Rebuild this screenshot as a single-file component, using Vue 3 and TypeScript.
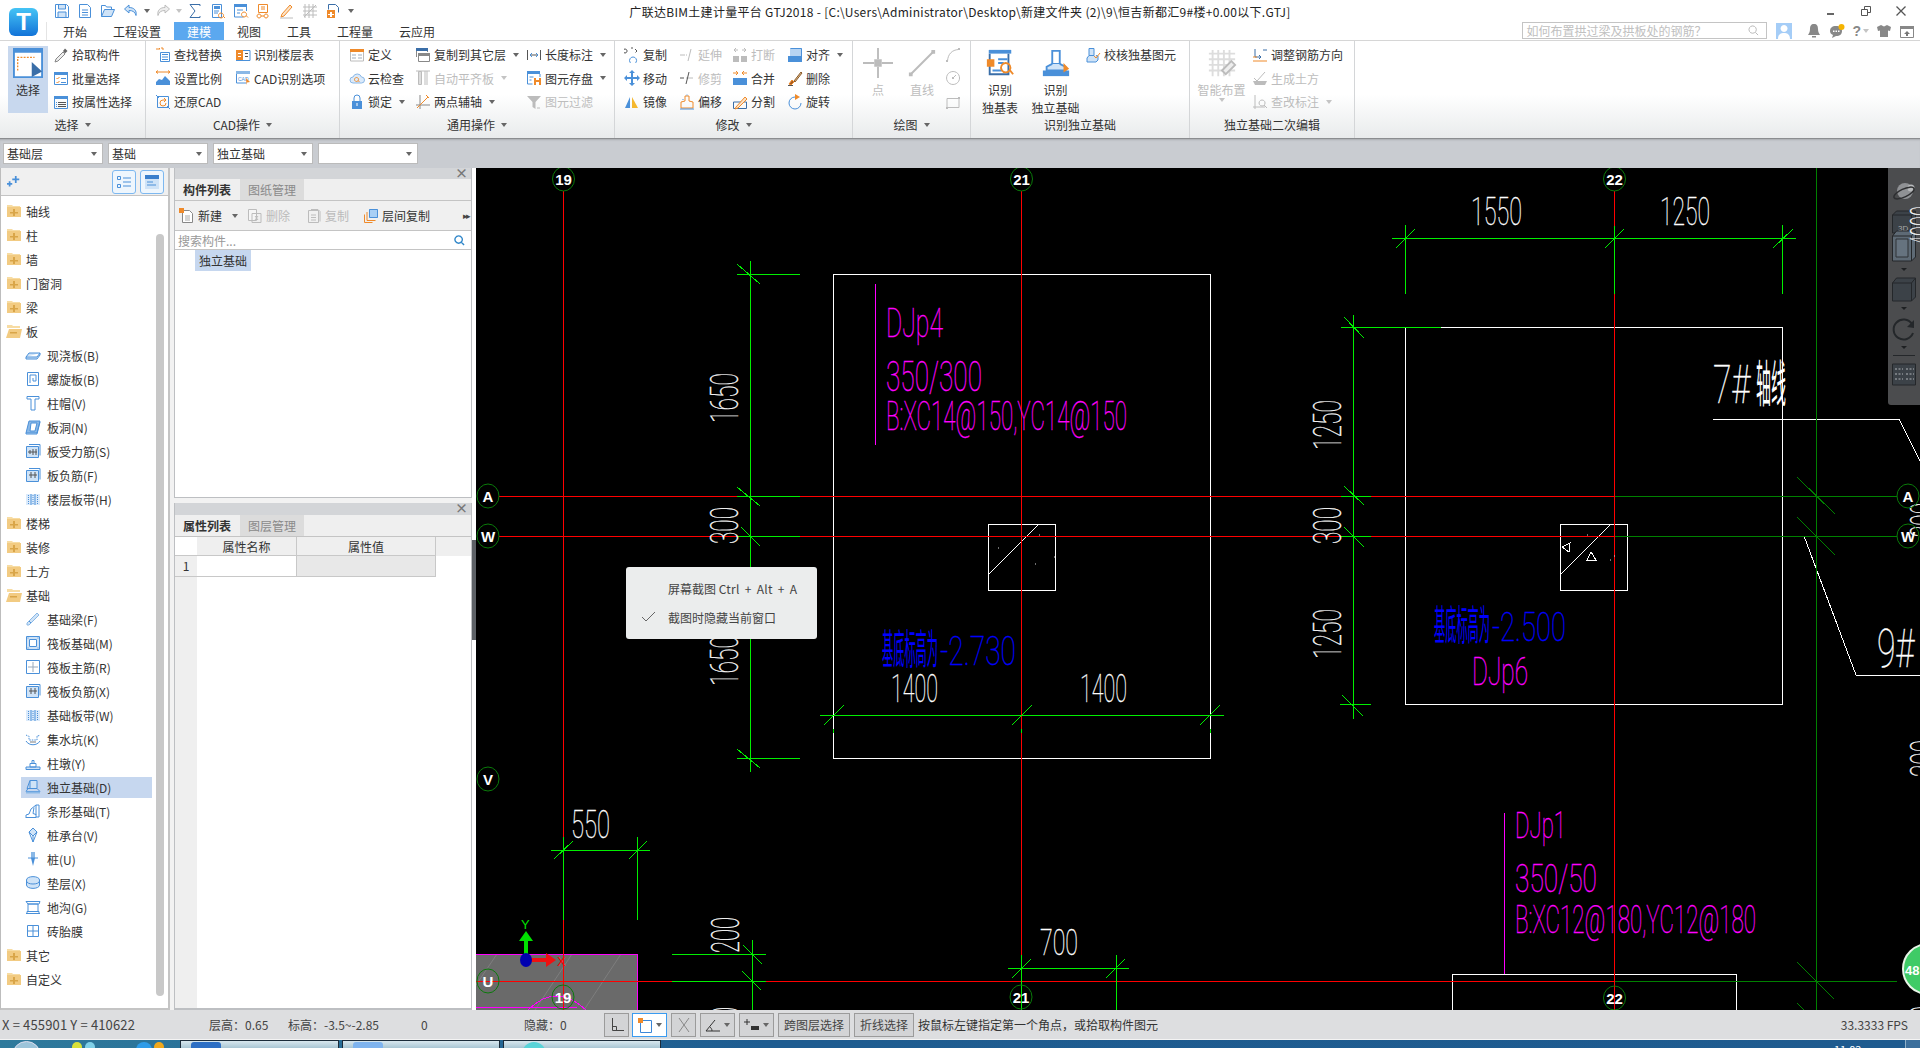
<script setup lang="ts">
const B = "#4a90d9";
const O = "#ef8a2a";
const G = "#bcbcbc";
const L = "#cfe3f7";
const K = "#555";

const p = (d: string, c = B, fill = "none") => `<path d="${d}" fill="${fill}" stroke="${c}"/>`;
const f = (d: string, c = B) => `<path d="${d}" fill="${c}"/>`;
const folder = (mark: string) =>
  f("M1 3V2h5l1 1h7v1H1z", "#f7dca3") + f("M1 4h14v10H1z", "#f2cb82") + f(mark, "#d9a548");

const icons: Record<string, string> = {
  save: p("M1.5 1.5h11l2 2v11h-13z") + p("M4.5 2v4h7V2M4 14V9h8v5", B, L),
  doc: p("M2.5 1.5h8l3 3v10h-11z") + p("M5 7h6M5 9.5h6M5 12h6"),
  open: p("M1.5 13.5v-11h4l1 1.5h5v2") + p("M1.5 13.5l3-7h10l-3 7z", B, L),
  undo: p("M6 2L1.5 6 6 10V7.5c4 0 6 1.5 7 5 1-5-2-8-7-8z", B, L),
  redo: p("M10 2l4.5 4L10 10V7.5c-4 0-6 1.5-7 5-1-5 2-8 7-8z", G, "#eee"),
  sum: p("M13 3V1.5H3L8 8l-5 6.5h10V13", "#3a6ea8"),
  report: p("M2.5 1.5h9v13h-9z") + f("M4 3h6v3H4z") + p("M4 8h5M4 10h4") + p("M11 10a2.5 2.5 0 1 0 .1 0zM13 13l2 2", O),
  find: f("M1 1h13v3H1z") + p("M1.5 4v10h9M13.5 4v4") + p("M4 7h6M4 10h3") + p("M11 9a2.5 2.5 0 1 0 .1 0zM13 12.5l2 2", O),
  glass: p("M2.5 1.5h9v8h-9z", O) + p("M5 4h4M5 6h4", O) + p("M3 11a2 2 0 1 0 .1 0zM10 11a2 2 0 1 0 .1 0zM5 13h3", O),
  pen: p("M3 11l8-9 2 2-8 9-3 1z", O, "#fbe3c8") + p("M1 15h13", G),
  grid: p("M3 1v14M7 1v14M11 1v14M1 4h14M1 8h14M1 12h14M2 14L14 2", G),
  addfile: p("M3.5 1.5h7l3 3v5M3.5 1.5v5", "#3a6ea8") + f("M2 7h8v8H2z", O) + f("M5 9h2v2h2v1H7v2H5v-2H3v-1h2z", "#fff"),
  select: f("M0 0h16v2H0z") + p("M.5 2h15v13.5H.5z", B, "#fff") + `<path d="M2.5 12V5h9" fill="none" stroke="${O}" stroke-width=".7" stroke-dasharray="1 .7"/>` + f("M10 7.5l5.5 5-5.5 3z", "#3a6ea8"),
  pick: p("M3 12l7-7 2 2-7 7-3 1z", "#888", "#eee") + f("M10 4l2-2.5 2.5 2.5L12 6.5z", "#666"),
  batch: f("M1 2h14v3H1z") + p("M1.5 5v9.5h13V5") + p("M3.5 8l1 1 2-2M3.5 12l1 1 2-2", O) + p("M8 8.5h5M8 12.5h5"),
  attr: f("M1 2h14v3H1z") + p("M1.5 5v9.5h13V5") + p("M5 8.5h8M5 10.5h8M5 12.5h8", K) + p("M3 8.5h1M3 10.5h1M3 12.5h1", B),
  replace: p("M1 2h4l-1-1M6 1h2v2", O) + p("M5.5 5.5h9v9h-9z") + f("M7 7h6v1H7zM7 9.5h6v1H7zM7 12h6v1H7z"),
  scale: p("M1 2h14M1 2l2-1.5M1 2l2 1.5M15 2l-2-1.5M15 2l-2 1.5", O) + f("M1 15V12l3-3 3 1 3-4 5 5v4z"),
  restore: p("M2.5 2.5h11v11h-11z") + p("M1 1l3 3M15 15l-3-3") + p("M11 9a3 3 0 1 1-3-3h2M9 4l2 2-2 2", O),
  floor: f("M1 3h7v10H1z", O) + p("M8 3.5h7v10H1") + f("M3 6h3v1H3zM3 9h3v1H3z", "#fff") + p("M10 6.5h3M10 9.5h3", K),
  cad: f("M1 1h14v3H1z", "#8ab8e6") + p("M1.5 4v9h10") + `<text x="3" y="10.5" font-size="5" font-family="Liberation Sans" fill="${B}">CAD</text>` + f("M11 8l4 4-3 .5-.5 2.5z", O),
  define: f("M1 2h14v3H1z", O) + p("M1.5 5v9h13V5", G) + f("M3 7h4v2H3zM3 10h4v2H3z", "#cfd6de") + f("M9 7h4v2H9zM9 10h4v2H9z", "#cfd6de"),
  cloud: p("M4 13a3 3 0 0 1 0-6 4.5 4.5 0 0 1 8.5 0 3 3 0 0 1 0 6z", "#8ab8e6", "#dbeafa") + p("M7.5 7.5a2 2 0 1 0 .1 0zM9 10.5l1.5 1.5", O),
  lock: p("M5 7V4a3 3 0 0 1 6 0v3", B) + f("M3 7h10v8H3z") + f("M7.5 9h1v3h-1z", "#fff"),
  copyfloor: f("M1 1h12v3H1z", "#3a6ea8") + p("M1.5 4v6M12.5 4v1", "#888") + f("M3 6h12v3H3z", "#888") + p("M3.5 9v5.5h11V9", "#888"),
  alignslab: p("M3.5 1.5h3v13h-3z", G, "#ddd") + f("M9 1h4v14H9z", "#ddd") + p("M1 1h14", G),
  twopoint: p("M1 11h14M5 1v14", "#888") + p("M2 14L13 3", O) + p("M11 1l3 3", O),
  dim: p("M1.5 3v10M14.5 3v10M4 8h8", K) + p("M6 6L4 8l2 2M10 6l2 2-2 2"),
  saveel: f("M1 1h13v3H1z") + p("M1.5 4v10h5M14 4v3") + p("M3.5 7h4M3.5 10h2") + f("M8 8h7v7H8z", O) + f("M10 8h3v2h-3zM10 12h3v3h-3z", "#fff"),
  filter: f("M1 2h14L9.5 8v7l-3-2V8z", G) + p("M11 14h3", G),
  copy: p("M1 2a2 2 0 1 0 .1 0", K) + p("M7 1h2", K) + p("M9 10a3.5 3.5 0 1 0 .1 0z") + p("M11 2l2 2-1.5 1.5", K),
  move: f("M8 0l3 3H5zM8 16l-3-3h6zM0 8l3-3v6zM16 8l-3 3V5z") + f("M3 7h10v2H3zM7 3h2v10H7z"),
  mirror: f("M1 14L6 3v11z") + f("M8 3l6 11H8z", "#f5b82e"),
  extend: p("M1 8h5", G) + `<path d="M7 8h2" stroke="${G}" stroke-dasharray="1 1"/>` + p("M12 2l-3 12", G),
  extendon: p("M1 8h4", K) + p("M7 8h7", G) + p("M10 2L7 14", K),
  offset: p("M6 2h4v5l4 1v6H2V8l4-1z", O) + p("M7.5 1h1M4 5v1", B) + p("M1 15h14"),
  breaks: f("M1 9h6v6H1zM9 9h6v6H9z", G) + p("M2 3h4M10 3h4M4 1l-2 2 2 2M12 1l2 2-2 2", G),
  merge: f("M1 8h14v7H1z") + p("M1 3h5M15 3h-5M4 1l2 2-2 2M12 1l-2 2 2 2", O),
  split: p("M1.5 8h13v6.5h-13z", "#3a6ea8") + p("M4 13L13 3l2 2-9 9-3 1z", O, "#fbe3c8"),
  alignto: f("M3 1h12v8H3z", "#b8d4f2") + p("M3.5 1.5h11v8", B) + f("M1 9h14v6H1z"),
  del: p("M2 14l3-4 2 2-3 3z", O, "#a85b1f") + p("M7 11L14 2l1 1-7 9z", "#8a5a2a", "#e4c28f") + p("M1 15.5h5", K),
  rotate: p("M8 3a6 6 0 1 0 6 6") + f("M8 0l5 3-5 3z", O),
  point: p("M8 0v6M8 10v6M0 8h6M10 8h6", G) + f("M6 6h4v4H6z", G),
  line: p("M2 14L14 2", G) + f("M1 13h2v2H1zM13 1h2v2h-2z", G),
  arc: p("M2.5 14C3 7 7 3 13.5 2.5", G) + f("M1 13h2v2H1zM13 1h2v2h-2z", G),
  circle: p("M8 1.5a6.5 6.5 0 1 0 .1 0zM8 8l3-3", G) + f("M7 7h2v2H7z", G),
  rect: p("M2 4.5h12v9H2z", G) + f("M13 3h2v2h-2zM1 13h2v2H1z", G),
  bigtable: f("M2 1h12v2H2z") + p("M2.5 3v11h10V3", "#3a6ea8") + f("M1 6h4v4H1z", O) + p("M7 6h5M7 8h3M4 12h5") + p("M11 8a2.5 2.5 0 1 0 .1 0zM13 11.5l2 2.5", O),
  bigfound: p("M6 1.5h4v7H6z") + p("M6 8.5L3 10v2h10v-2l-3-1.5", B, L) + f("M1 12h14v3H1z") + f("M12 8l3 3-3 2z", O),
  check: p("M4 1.5h5v7H4zM4 8.5L2 11v4h9l2-2V9l-2-.5", B, L) + p("M9 9l2 2 4-5", O),
  smart: p("M3 1v14M6 1v14M9 1v14M12 1v14M1 3h14M1 6h14M1 9h14M1 12h14", "#ddd") + p("M8 12l5-5 2 2-5 5z", G, "#eee"),
  rebar: p("M3 2v8h6M7 8l2 2-2 2", "#3a6ea8") + p("M1 14h14M1 10h4", O) + p("M11 3h4", "#3a6ea8"),
  earth: p("M2 8l3 3 8-9", G) + f("M1 11h14l-2 4H3z", G),
  mark: p("M3 1v14M1 13h12", G) + p("M10 6a3 3 0 1 0 .1 0zM12 11l3 3", G),
  plus2: f("M9 1h2v3h3v2h-3v3H9V6H6V4h3zM2 7h2v2h2v2H4v2H2v-2H0V9h2z"),
  fplus: folder("M7 6h2v3h3v1.5H9V13H7v-2.5H4V9h3z"),
  fminus: f("M1 3V2h5l1 1h7v2H1z", "#f7dca3") + f("M3 6h13l-2 9H0z", "#f2cb82") + f("M4 9h7v1.5H4z", "#d9a548"),
  list: p("M1.5 2.5h3v3h-3zM1.5 10.5h3v3h-3zM7 4h8M7 8h8M7 12h8"),
  panel: f("M1 1h14v14H1z", "#cfe3f7") + f("M1 1h14v4H1z", "#3a7fcc") + p("M3 8h6M3 11h9", B),
  pnew: p("M3.5 2.5h7l3 3v9h-10z", "#888", "#fff") + p("M6 8h5M6 10h5M6 12h5", "#aaa") + f("M0 0h5v5H0z", O),
  pdel: p("M1.5 1.5h8v11h-8z", G, "#f6f6f6") + p("M5 5.5h9v9H5z", G) + p("M8 8l3 4M11 8l-3 4", G),
  pcopy: p("M2.5 2.5h10v12h-10z", G) + p("M5 1.5h7l2 2v10", G) + p("M5 7h5M5 9.5h5M5 12h5", G),
  pfloor: f("M6 1h9v9H6z", "#a8cff5") + p("M6.5 1.5h8v8h-8z") + p("M4 4v8.5h8.5M1.5 6.5v8h8", O),
  slab: p("M4 6h11l-3 4H1zM1 10v2h11l3-4V6", B, L),
  spiral: p("M2.5 1.5h11v13h-11zM5 12V4h6v6H8V7"),
  cap: p("M2 1.5h12V4H10v11H6V4H2z"),
  hole: p("M4 2h11l-3 12H1z", B, "#8ab8e6") + p("M6 4h6l-2 8H5z", B, "#fff") + p("M1 14v1h11l3-12"),
  rebarS: p("M1.5 3.5h12v11h-12z", B, L) + p("M4 1.5h11v11") + p("M3 9h9M8 6v6M5 7v4M11 6v6", K),
  rebarN: p("M1.5 3.5h12v11h-12z", B, L) + p("M4 1.5h11v11") + p("M4 8h8M6 5v6M10 5v6", K),
  band: f("M1 3h14v11H1z", "#dbeafa") + p("M6 3v11M10 3v11", B) + `<path d="M3.5 4v10M8 4v10M12.5 4v10" stroke="${B}" stroke-dasharray="1 1"/>`,
  beam: p("M2 12L12 2l2 2L4 14H2z", "#8ab8e6", L) + p("M4 10l2 2"),
  raft: p("M1.5 1.5h13v13h-13zM4.5 4.5h7v7h-7z") + `<path d="M1.5 3h13M1.5 13h13M3 1.5v13M13 1.5v13" stroke="${B}" stroke-dasharray="1 1"/>`,
  raftR: p("M1.5 1.5h13v13h-13z") + p("M8 3v10M3 8h10", "#9ab"),
  pit: `<path d="M1 4c1 1 3 1 3 1v4h8V5s2 0 3-1" fill="none" stroke="${B}" stroke-dasharray="1.5 1"/>` + p("M1 10c3 5 11 5 14 0") + f("M5 10h6v2H5z", G),
  pier: p("M1 12h14v2.5H1z", B, L) + p("M5 8.5h6V12H5zM7 5.5h2v3H7z"),
  found: p("M5 1.5h7v8H5z", B, L) + p("M5 1.5L2 9.5h3M12 9.5l3 3H1l2-3") + f("M1 12.5h14v2H1z", "#8ab8e6"),
  strip: p("M1 15v-3l3-1 2-5 5-4h3v12h-3") + p("M1 14.5h10v-3l-3-1 1-6M11 2v10", B),
  cap2: p("M8 1l4 4-4 4-4-4zM4 5l4 10M12 5l-4 10M8 9v6", B, L),
  pile: f("M6 1h4v6H6z", "#8ab8e6") + p("M3 7h10") + f("M6 7h4l-2 8z"),
  pad: p("M1.5 5c0-4.5 13-4.5 13 0v5c0 4.5-13 4.5-13 0z", B, L) + p("M1.5 6c0 4 13 4 13 0"),
  ditch: p("M1 14.5h14M2 14.5v-2h12v2M3 12.5V5h10v7.5M1 2.5h14l-1 2.5H3z"),
  brick: p("M2.5 2.5h11v11h-11zM8 2.5v11M2.5 8h11"),
};

interface Item { t?: string; i: string; off?: boolean; caret?: boolean; big?: boolean; on?: boolean }
interface Col { w: number; items: Item[] }
interface Group { label: string; w: number; left: number; caret?: boolean; cols: Col[] }

const groups: Group[] = [
  { label: "选择", w: 146, left: 8, caret: true, cols: [
    { w: 45, items: [{ t: "选择", i: "select", big: true, on: true }] },
    { w: 90, items: [{ t: "拾取构件", i: "pick" }, { t: "批量选择", i: "batch" }, { t: "按属性选择", i: "attr" }] },
  ] },
  { label: "CAD操作", w: 194, left: 9, caret: true, cols: [
    { w: 80, items: [{ t: "查找替换", i: "replace" }, { t: "设置比例", i: "scale" }, { t: "还原CAD", i: "restore" }] },
    { w: 100, items: [{ t: "识别楼层表", i: "floor" }, { t: "CAD识别选项", i: "cad" }] },
  ] },
  { label: "通用操作", w: 275, left: 9, caret: true, cols: [
    { w: 66, items: [{ t: "定义", i: "define" }, { t: "云检查", i: "cloud" }, { t: "锁定", i: "lock", caret: true }] },
    { w: 111, items: [{ t: "复制到其它层", i: "copyfloor", caret: true }, { t: "自动平齐板", i: "alignslab", off: true, caret: true }, { t: "两点辅轴", i: "twopoint", caret: true }] },
    { w: 85, items: [{ t: "长度标注", i: "dim", caret: true }, { t: "图元存盘", i: "saveel", caret: true }, { t: "图元过滤", i: "filter", off: true }] },
  ] },
  { label: "修改", w: 238, left: 9, caret: true, cols: [
    { w: 55, items: [{ t: "复制", i: "copy" }, { t: "移动", i: "move" }, { t: "镜像", i: "mirror" }] },
    { w: 53, items: [{ t: "延伸", i: "extend", off: true }, { t: "修剪", i: "extendon", off: true }, { t: "偏移", i: "offset" }] },
    { w: 55, items: [{ t: "打断", i: "breaks", off: true }, { t: "合并", i: "merge" }, { t: "分割", i: "split" }] },
    { w: 60, items: [{ t: "对齐", i: "alignto", caret: true }, { t: "删除", i: "del" }, { t: "旋转", i: "rotate" }] },
  ] },
  { label: "绘图", w: 118, left: 4, caret: true, cols: [
    { w: 42, items: [{ t: "点", i: "point", big: true, off: true }] },
    { w: 46, items: [{ t: "直线", i: "line", big: true, off: true }] },
    { w: 20, items: [{ i: "arc", off: true }, { i: "circle", off: true }, { i: "rect", off: true }] },
  ] },
  { label: "识别独立基础", w: 219, left: 3, cols: [
    { w: 52, items: [{ t: "识别\n独基表", i: "bigtable", big: true }] },
    { w: 59, items: [{ t: "识别\n独立基础", i: "bigfound", big: true }] },
    { w: 100, items: [{ t: "校核独基图元", i: "check" }] },
  ] },
  { label: "独立基础二次编辑", w: 165, left: 1, cols: [
    { w: 61, items: [{ t: "智能布置", i: "smart", big: true, off: true, caret: true }] },
    { w: 100, items: [{ t: "调整钢筋方向", i: "rebar" }, { t: "生成土方", i: "earth", off: true }, { t: "查改标注", i: "mark", off: true, caret: true }] },
  ] },
];

const qat = ["save", "doc", "open", "undo", "redo", "sum", "report", "find", "glass", "pen", "grid", "addfile"];
const tabs = ["开始", "工程设置", "建模", "视图", "工具", "工程量", "云应用"];
const combos = ["基础层", "基础", "独立基础", ""];

interface Node { t: string; i: string; sub?: boolean; on?: boolean }
const tree: Node[] = [
  { t: "轴线", i: "fplus" }, { t: "柱", i: "fplus" }, { t: "墙", i: "fplus" }, { t: "门窗洞", i: "fplus" },
  { t: "梁", i: "fplus" }, { t: "板", i: "fminus" },
  { t: "现浇板(B)", i: "slab", sub: true }, { t: "螺旋板(B)", i: "spiral", sub: true }, { t: "柱帽(V)", i: "cap", sub: true },
  { t: "板洞(N)", i: "hole", sub: true }, { t: "板受力筋(S)", i: "rebarS", sub: true }, { t: "板负筋(F)", i: "rebarN", sub: true },
  { t: "楼层板带(H)", i: "band", sub: true },
  { t: "楼梯", i: "fplus" }, { t: "装修", i: "fplus" }, { t: "土方", i: "fplus" }, { t: "基础", i: "fminus" },
  { t: "基础梁(F)", i: "beam", sub: true }, { t: "筏板基础(M)", i: "raft", sub: true }, { t: "筏板主筋(R)", i: "raftR", sub: true },
  { t: "筏板负筋(X)", i: "rebarN", sub: true }, { t: "基础板带(W)", i: "band", sub: true }, { t: "集水坑(K)", i: "pit", sub: true },
  { t: "柱墩(Y)", i: "pier", sub: true }, { t: "独立基础(D)", i: "found", sub: true, on: true }, { t: "条形基础(T)", i: "strip", sub: true },
  { t: "桩承台(V)", i: "cap2", sub: true }, { t: "桩(U)", i: "pile", sub: true }, { t: "垫层(X)", i: "pad", sub: true },
  { t: "地沟(G)", i: "ditch", sub: true }, { t: "砖胎膜", i: "brick", sub: true }, { t: "其它", i: "fplus" }, { t: "自定义", i: "fplus" },
];

const RED = "#ff0000";
const LIME = "#00ee00";
const DARK = "#008000";
const MAG = "#ff00ff";
const BLUE = "#0000ff";

const strokes = [
  { c: "#fff", d: "M833.5 274.5H1210.5V758.5H833.5ZM988.5 524H1055.5V590.5H988.5ZM1039 524L989 574M1405.5 327H1782.5V704.5H1405.5ZM1560.5 524H1627.5V590.5H1560.5ZM1611 524L1561 574M1713 419H1899L1920 461M1804 536L1856 675H1920M1452.5 1010V974.5H1736.5V1010M1562 547L1570 543L1569 552ZM1591 552L1587 560H1596Z" },
  { c: MAG, d: "M875.5 284V445M1504.5 813V974M476 954.5H637.5V1010M476 1007.5H577M528 1010Q556 982 586 1010" },
  { c: DARK, d: "M1816.5 168V1010M1614 496.5H1897M1614 536.5H1897M1614 981.5H1897M1797 477L1835 514M1797 517L1835 555M1797 962L1834 999M1797 1003L1804 1010" },
  { c: RED, d: "M563.5 191V837M563.5 920V1010M1021.5 191V955M1614.5 191V226M1614.5 294V1010M499 496.5H737M800 496.5H1341M1371 496.5H1614M499 536.5H737M800 536.5H1341M1371 536.5H1614M476 981.5H672M766 981.5H1614" },
  { c: LIME, d: "M750.5 261V772M737 274.5H800M737 496.5H800M737 536.5H800M737 758.5H800M737 264L760 284M737 487L760 506M741 527L760 546M737 749L760 768M820 715.5H1224M824 725L844 705M1012 725L1032 705M1200 725L1220 705M833.5 729V733M1021.5 729V733M1210.5 729V733M1392 238.5H1796M1405.5 225V294M1614.5 226V294M1782.5 225V294M1396 248L1415 229M1605 248L1624 229M1773 248L1793 229M1353.5 315V719M1341 327.5H1441M1341 496.5H1371M1341 536.5H1371M1340 704.5H1371M1344 317L1364 338M1344 486L1364 505M1344 527L1364 547M1342 695L1363 716M551 850.5H650M563.5 837V920M637.5 837V920M554 859L573 841M629 859L647 841M672 954.5H766M672 981.5H766M752.5 940V1010M743 945L762 964M742 971L761 990M1008 968.5H1129M1021.5 955V1010M1116.5 955V1010M1012 978L1031 959M1106 978L1125 959" },
];

interface Label { t: string; x: number; y: number; w: number; h: number; c?: string; r?: boolean; cjk?: boolean }
const labels: Label[] = [
  { t: "1650", x: 738, y: 423, w: 50, h: 28, r: true },
  { t: "1650", x: 738, y: 686, w: 50, h: 28, r: true },
  { t: "300", x: 738, y: 544, w: 37, h: 28, r: true },
  { t: "DJp4", x: 886, y: 336.5, w: 57, h: 29, c: MAG },
  { t: "350/300", x: 886, y: 391, w: 96, h: 30, c: MAG },
  { t: "B:XC14@150,YC14@150", x: 886, y: 430, w: 241, h: 29, c: MAG },
  { t: "基底标高为", x: 882, y: 664, w: 56, h: 29, c: BLUE, cjk: true },
  { t: "-2.730", x: 940, y: 665, w: 76, h: 29, c: BLUE },
  { t: "1400", x: 891, y: 702, w: 47, h: 28 },
  { t: "1400", x: 1080, y: 702, w: 47, h: 28 },
  { t: "1550", x: 1471, y: 225, w: 51, h: 28 },
  { t: "1250", x: 1660, y: 225, w: 50, h: 28 },
  { t: "1250", x: 1341, y: 450, w: 50, h: 28, r: true },
  { t: "1250", x: 1341, y: 659, w: 50, h: 28, r: true },
  { t: "300", x: 1341, y: 544, w: 37, h: 28, r: true },
  { t: "基底标高为", x: 1434, y: 640, w: 56, h: 29, c: BLUE, cjk: true },
  { t: "-2.500", x: 1492, y: 641, w: 74, h: 29, c: BLUE },
  { t: "DJp6", x: 1472, y: 685, w: 56, h: 28, c: MAG },
  { t: "7#", x: 1713, y: 403, w: 37, h: 38 },
  { t: "轴线", x: 1756, y: 402, w: 30, h: 36, cjk: true },
  { t: "9#", x: 1877, y: 667, w: 37, h: 38 },
  { t: "550", x: 571, y: 838, w: 39, h: 28 },
  { t: "200", x: 739, y: 953, w: 36, h: 28, r: true },
  { t: "200", x: 739, y: 1043, w: 36, h: 28, r: true },
  { t: "700", x: 1040, y: 955, w: 38, h: 27 },
  { t: "DJp1", x: 1515, y: 838, w: 51, h: 27, c: MAG },
  { t: "350/50", x: 1515, y: 892, w: 82, h: 28, c: MAG },
  { t: "B:XC12@180,YC12@180", x: 1515, y: 933, w: 241, h: 28, c: MAG },
  { t: "300", x: 1938, y: 537, w: 34, h: 28, r: true },
  { t: "300", x: 1938, y: 777, w: 37, h: 28, r: true },
  { t: "300", x: 1938, y: 1043, w: 37, h: 28, r: true },
];

const bubbles: [string, number, number][] = [
  ["19", 563.5, 179], ["21", 1021.5, 179], ["22", 1614.5, 179], ["A", 488, 496], ["W", 488, 536], ["V", 488, 779],
  ["U", 488, 981], ["19", 563, 997], ["21", 1021, 997], ["22", 1614.5, 998], ["A", 1908, 496], ["W", 1908, 536],
];
</script>

<template>
  <div class="app">
    <header class="head">
      <div class="logo"><span>T</span></div>
      <div class="row1">
        <div class="qat">
          <template v-for="q in qat" :key="q">
            <svg class="ic qi" :class="'q-' + q" viewBox="0 0 16 16" v-html="icons[q]"></svg>
            <i v-if="q === 'undo' || q === 'redo'" class="caret" :class="{ pale: q === 'redo' }"></i>
          </template>
          <i class="caret more"></i>
        </div>
        <div class="title">广联达BIM土建计量平台 GTJ2018 - [C:\Users\Administrator\Desktop\新建文件夹 (2)\9\恒吉新都汇9#楼+0.00以下.GTJ]</div>
        <div class="winbtns">
          <svg viewBox="0 0 12 12"><path d="M2 8h7v2H2z" fill="#666" /></svg>
          <svg viewBox="0 0 12 12"><path d="M1.5 4.5h6v6h-6zM4.5 4V1.5h6v6H8" fill="none" stroke="#555" /></svg>
          <svg viewBox="0 0 12 12"><path d="M1.5 1.5l9 9M10.5 1.5l-9 9" fill="none" stroke="#555" stroke-width="1.3" /></svg>
        </div>
      </div>
      <div class="row2">
        <nav class="tabs">
          <span v-for="t in tabs" :key="t" class="tab" :class="{ on: t === '建模' }">{{ t }}</span>
        </nav>
        <div class="tools">
          <div class="search">
            <span>如何布置拱过梁及拱板处的钢筋？</span>
            <svg viewBox="0 0 12 12"><path d="M5 1a4 4 0 1 0 .1 0zM8 8l3 3" fill="none" stroke="#b5b5b5" /></svg>
          </div>
          <svg class="avatar" viewBox="0 0 16 16">
            <path d="M0 0h16v16H0z" fill="#a5cdf7" /><path d="M8 2a3.5 3.5 0 1 0 .1 0zM2 16c0-5 3-6 6-6s6 1 6 6z" fill="#fff" />
          </svg>
          <svg class="ti t1" viewBox="0 0 14 14"><path d="M7 0c3 0 4 2 4 5s1 4 2 6H1c1-2 2-3 2-6s1-5 4-5zM5 12h4v1.5H5z" fill="#888" /></svg>
          <svg class="ti t2" viewBox="0 0 16 14">
            <path d="M7 2c4 0 6 2 6 5s-2 5-6 5l-4 2 1-3C2 10 1 9 1 7c0-3 2-5 6-5z" fill="#888" />
            <path d="M4 6.5h1.5V8H4zM6.5 6.5H8V8H6.5zM9 6.5h1.5V8H9z" fill="#fff" />
            <circle cx="12.5" cy="3" r="3" fill="#f5b400" />
          </svg>
          <span class="qm">?</span><i class="caret pale"></i>
          <svg class="ti t4" viewBox="0 0 14 14"><path d="M4 1L0 3l1 4 2-.5V13h8V6.5l2 .5 1-4-4-2-3 1.5z" fill="#888" /></svg>
          <svg class="ti t5" viewBox="0 0 14 14"><path d="M.5 2.5h13v11H.5z" fill="none" stroke="#888" /><path d="M0 2h14v3H0z" fill="#888" /><path d="M7 7l3 3H8v2H6v-2H4z" fill="#777" /></svg>
        </div>
      </div>
    </header>

    <section class="ribbon">
      <div v-for="g in groups" :key="g.label" class="group" :style="{ width: g.w + 'px' }">
        <div class="cols" :style="{ paddingLeft: g.left + 'px' }">
          <div v-for="(col, ci) in g.cols" :key="ci" class="col" :style="{ width: col.w + 'px' }">
            <div v-for="it in col.items" :key="it.i" class="rb" :class="{ big: it.big, off: it.off, on: it.on }">
              <svg class="ic" viewBox="0 0 16 16" v-html="icons[it.i]"></svg>
              <span v-if="it.t" class="rb-t">{{ it.t }}</span>
              <i v-if="it.caret" class="caret" :class="{ pale: it.off }"></i>
            </div>
          </div>
        </div>
        <div class="glabel">{{ g.label }}<i v-if="g.caret" class="caret"></i></div>
      </div>
    </section>

    <section class="combos">
      <div v-for="(c, i) in combos" :key="i" class="combo"><span>{{ c }}</span><i class="caret"></i></div>
    </section>

    <main class="main">
      <aside class="side">
        <div class="side-top">
          <svg class="ic plus" viewBox="0 0 16 16" v-html="icons.plus2"></svg>
          <div class="sbtn"><svg class="ic" viewBox="0 0 16 16" v-html="icons.list"></svg></div>
          <div class="sbtn"><svg class="ic" viewBox="0 0 16 16" v-html="icons.panel"></svg></div>
        </div>
        <div class="side-body">
          <ul class="tree">
            <li v-for="n in tree" :key="n.t" class="node" :class="{ sub: n.sub, on: n.on }">
              <svg class="ic" viewBox="0 0 16 16" v-html="icons[n.i]"></svg>
              <span>{{ n.t }}</span>
            </li>
          </ul>
          <div class="scroll"></div>
        </div>
      </aside>

      <div class="panels">
        <section class="panel p1">
          <div class="phead"><span>×</span></div>
          <div class="ptabs"><span class="on">构件列表</span><span>图纸管理</span></div>
          <div class="ptools">
            <div class="pt w1">
              <svg class="ic" viewBox="0 0 16 16" v-html="icons.pnew"></svg><span>新建</span><i class="caret"></i>
            </div>
            <div class="pt w2 off"><svg class="ic" viewBox="0 0 16 16" v-html="icons.pdel"></svg><span>删除</span></div>
            <div class="pt w3 off"><svg class="ic" viewBox="0 0 16 16" v-html="icons.pcopy"></svg><span>复制</span></div>
            <div class="pt"><svg class="ic" viewBox="0 0 16 16" v-html="icons.pfloor"></svg><span>层间复制</span></div>
            <span class="pmore">▸▸</span>
          </div>
          <div class="psearch">
            <span>搜索构件...</span>
            <svg viewBox="0 0 12 12"><path d="M5 1a4 4 0 1 0 .1 0zM8 8l3 3" fill="none" stroke="#2f86c9" stroke-width="1.5" /></svg>
          </div>
          <div class="plist"><span>独立基础</span></div>
        </section>

        <section class="panel p2">
          <div class="phead"><span>×</span></div>
          <div class="ptabs"><span class="on">属性列表</span><span>图层管理</span></div>
          <div class="table">
            <div class="thead"><span class="c0"></span><span class="c1">属性名称</span><span class="c2">属性值</span></div>
            <div class="trow"><span class="c0">1</span><span class="c1"></span><span class="c2"></span></div>
            <div class="tfill"><span class="c0"></span></div>
          </div>
        </section>
      </div>
      <div class="split"><i></i></div>

      <div class="canvas">
        <svg class="cad" viewBox="476 168 1444 842">
          <path d="M476 954h161v56H476z" fill="#6a6a6a" />
          <path d="M476 985L497 954M535 1010L572 954M584 1010L621 954" stroke="#7e7e7e" fill="none" />
          <path v-for="s in strokes" :key="s.c" :d="s.d" :stroke="s.c" fill="none" shape-rendering="crispEdges" />
          <path d="M998 548h1M1039 535h1M1035 564h1M1054 557h1M1587 535h1M1610 560h1M1614 556h1" stroke="#ddd" fill="none" />

          <text
            v-for="(l, i) in labels"
            :key="i"
            class="cadtext"
            :class="{ cjk: l.cjk }"
            :x="l.x"
            :y="l.y"
            :fill="l.c || '#fff'"
            :stroke="l.cjk ? 'none' : l.c || '#fff'"
            :font-size="l.h * 1.4"
            :textLength="l.w"
            lengthAdjust="spacingAndGlyphs"
            :transform="l.r ? `rotate(-90 ${l.x} ${l.y})` : undefined"
          >{{ l.t }}</text>

          <g v-for="(b, i) in bubbles" :key="i">
            <ellipse :cx="b[1]" :cy="b[2]" rx="11" ry="12" fill="none" stroke="#0a7a0a" />
            <text class="bub" :x="b[1]" :y="b[2] + 6" text-anchor="middle">{{ b[0] }}</text>
          </g>

          <path d="M524 960V941h-5l7-10 7 10h-5v19z" fill="#00e000" />
          <path d="M526 958h20v-5l10 7-10 7v-5h-20z" fill="#ee1111" />
          <ellipse cx="526" cy="960" rx="6" ry="7" fill="#0000b0" />
          <text class="axis" x="521" y="929" fill="#00e000">Y</text>
          <text class="axis" x="557" y="966" fill="#ff0000">X</text>

          <!-- 右侧视图工具条 -->
          <path d="M1888 168h32v237h-29q-3 0-3-3z" fill="#4b4c4e" />
          <circle cx="1905" cy="191" r="8" fill="#8f9194" />
          <circle cx="1911" cy="188" r="3.5" fill="#b8babc" />
          <ellipse cx="1904" cy="193" rx="11" ry="4" fill="none" stroke="#2e2f31" stroke-width="1.5" transform="rotate(-25 1904 193)" />
          <path d="M1892.5 215l4-4h19v18l-4 4h-19zM1892.5 215h19v18M1911.5 215l4-4" fill="#3c4248" stroke="#24272a" />
          <text class="t3d" x="1898" y="231">3D</text>
          <path d="M1892.5 236l4-5h19v26l-4 4h-19zM1892.5 236h19v25M1911.5 236l4-5" fill="#5e6a75" stroke="#24272a" />
          <path d="M1896 239h12v18h-12z" fill="#66737f" stroke="#2e3236" />
          <path d="M1901 268h6l-3 3z" fill="#1e2022" />
          <path d="M1892.5 283l4-5h19v19l-4 4h-19zM1892.5 283h19v18M1911.5 283l4-5" fill="#3c4248" stroke="#24272a" />
          <path d="M1901 307h6l-3 3z" fill="#1e2022" />
          <path d="M1912 324a10 10 0 1 0 1 9" fill="none" stroke="#24272a" stroke-width="2" />
          <path d="M1907 327l7-7v8z" fill="#24272a" />
          <path d="M1901 346h6l-3 3z" fill="#1e2022" />
          <path d="M1893 355.5h22" stroke="#24272a" />
          <path d="M1892.5 364h23v21h-23z" fill="#3c4248" stroke="#24272a" />
          <path d="M1895 369h8M1895 374h8M1895 379h8M1906 369h8M1906 374h8M1906 379h8" stroke="#b0b4b8" stroke-dasharray="2 1.5" />
          <text class="cadtext" x="1938" y="246" fill="#fff" stroke="#fff" font-size="39" textLength="40" lengthAdjust="spacingAndGlyphs" transform="rotate(-90 1938 246)">4000</text>

          <circle cx="1928" cy="969" r="25" fill="#3fcb66" stroke="#e8f5e8" stroke-width="2" />
          <text class="ball" x="1905" y="975">48</text>
        </svg>

        <div class="popup">
          <div class="pop-row"><span>屏幕截图 <span class="latin">Ctrl + Alt + A</span></span></div>
          <div class="pop-row">
            <svg viewBox="0 0 16 10"><path d="M1 5l4 4 9-9" fill="none" stroke="#666" /></svg>
            <span>截图时隐藏当前窗口</span>
          </div>
        </div>
      </div>
    </main>

    <footer class="status">
      <span class="s-xy">X = 455901 Y = 410622</span>
      <span class="s-h">层高：0.65</span>
      <span class="s-e">标高：-3.5~-2.85</span>
      <span class="s-z">0</span>
      <span class="s-v">隐藏：0</span>
      <div class="sb b1">
        <svg viewBox="0 0 16 16"><path d="M3.5 1v12.5H15M3.5 9.5h4v4" fill="none" stroke="#444" /></svg>
      </div>
      <div class="sb b2">
        <svg viewBox="0 0 16 16"><path d="M3.5 3.5h11v12h-11z" fill="none" stroke="#3a86d8" /><path d="M1 1h5v5H1z" fill="#ef8a2a" /></svg>
        <i class="caret"></i>
      </div>
      <div class="sb b3">
        <svg viewBox="0 0 16 16"><path d="M3 1l10 14M13 1L3 15" fill="none" stroke="#888" /></svg>
      </div>
      <div class="sb b4">
        <svg viewBox="0 0 16 16"><path d="M1 14h14M1 14l9-11M7 14c0-2-1-3-2-4" fill="none" stroke="#333" /></svg>
        <i class="caret"></i>
      </div>
      <div class="sb b4">
        <svg viewBox="0 0 16 16"><path d="M3 2v6M0 5h6" fill="none" stroke="#333" /><path d="M7 9h8v4H7z" fill="#333" /></svg>
        <i class="caret"></i>
      </div>
      <div class="sb bt1">跨图层选择</div>
      <div class="sb bt2">折线选择</div>
      <span class="s-tip">按鼠标左键指定第一个角点，或拾取构件图元</span>
      <span class="s-fps">33.3333 FPS</span>
    </footer>

    <footer class="taskbar">
      <div class="orb"></div>
      <i class="dot d1"></i><i class="dot d2"></i><i class="dot d3"></i><i class="dot d4"></i>
      <div class="task t-a"><b></b></div>
      <div class="task t-b"><b></b></div>
      <div class="task t-c"><b></b></div>
      <span class="clock">11:02</span>
      <div class="show"></div>
    </footer>
  </div>
</template>

<style scoped>
.app {
  width: 1920px;
  height: 1048px;
  overflow: hidden;
  display: flex;
  flex-direction: column;
  position: relative;
  background: #fff;
  color: #333;
  font: 12px "Noto Sans CJK SC", "Noto Sans", sans-serif;
}
svg { display: block; flex: none; }
.ic { width: 16px; height: 16px; }

.caret {
  display: inline-block;
  width: 0;
  height: 0;
  border: 3.5px solid transparent;
  border-top: 4px solid #666;
  border-bottom: 0;
  flex: none;
}
.caret.pale { border-top-color: #c4c4c4; }

/* title + tabs */
.head { height: 41px; flex: none; position: relative; border-bottom: 1px solid #d6d6d6; box-sizing: border-box; }
.head::before { content: ""; position: absolute; left: 46px; top: 22px; bottom: 0; border-left: 1px solid #e4e4e4; }
.logo {
  position: absolute;
  left: 9px;
  top: 8px;
  width: 29px;
  height: 28px;
  border-radius: 6px;
  background: linear-gradient(#45c4f5, #1273d8);
  color: #fff;
  font: 700 24px/28px "Liberation Sans", sans-serif;
  text-align: center;
}
.row1 { height: 22px; display: grid; grid-template-columns: 1fr auto 1fr; align-items: center; }
.qat { display: flex; align-items: center; padding-left: 54px; }
.qi { margin-right: 7px; }
.qat .caret { margin-left: -2px; margin-right: 5px; }
.qat .more { margin-left: 0; }
.title { white-space: pre; color: #222; letter-spacing: .3px; }
.winbtns { display: flex; justify-content: flex-end; gap: 23px; padding-right: 13px; }
.winbtns svg { width: 12px; height: 12px; }
.row2 { height: 18px; display: flex; justify-content: space-between; }
.tabs { display: flex; padding-left: 50px; }
.tab { padding: 0 13px; line-height: 19px; height: 18px; }
.tab.on { background: #5ba8ef; color: #fff; }
.tools { display: flex; align-items: center; padding-right: 6px; margin-top: -1px; }
.search {
  width: 245px;
  height: 17px;
  box-sizing: border-box;
  border: 1px solid #c4c4c4;
  display: flex;
  align-items: center;
  justify-content: space-between;
  padding: 0 7px 0 3px;
  color: #c0c0c0;
  line-height: 15px;
}
.search svg { width: 11px; height: 11px; }
.avatar { width: 16px; height: 16px; margin-left: 9px; }
.ti { width: 14px; height: 14px; }
.t1 { margin-left: 15px; }
.t2 { width: 16px; margin-left: 8px; }
.t4 { margin-left: 8px; }
.t5 { margin-left: 9px; }
.qm { margin-left: 7px; font: 700 14px "Liberation Sans", sans-serif; color: #888; }
.tools .caret { margin-left: 2px; }

/* ribbon */
.ribbon {
  height: 98px;
  flex: none;
  display: flex;
  box-sizing: border-box;
  border-bottom: 1px solid #8b8d90;
  background: linear-gradient(#fff 55%, #e9ebec);
}
.group { box-sizing: border-box; border-right: 1px solid #d4d6d8; display: flex; flex-direction: column; flex: none; }
.cols { display: flex; height: 71px; padding-top: 2px; box-sizing: border-box; }
.col { flex: none; }
.rb { height: 23.5px; display: flex; align-items: center; gap: 3px; white-space: nowrap; }
.rb .caret { margin-left: 4px; }
.rb.off { color: #bdbdbd; }
.rb.big { height: 67px; margin-top: 3px; flex-direction: column; justify-content: flex-start; gap: 0; text-align: center; }
.rb.big .ic { width: 30px; height: 30px; margin: 2px 0; flex: none; }
.rb.big .rb-t { line-height: 18px; white-space: pre-line; margin-top: 1px; }
.rb.big .caret { margin: 0; margin-top: -1px; }
.rb.big.on { width: 40px; background: #c8d8ee; }
.glabel { flex: 1; display: flex; align-items: center; justify-content: center; gap: 6px; line-height: 24px; }

.combos { height: 29px; flex: none; display: flex; align-items: center; padding-left: 3px; gap: 5px; background: #c9ccd1; box-sizing: border-box; box-shadow: inset 0 2px 2px -1px #a8abaf; }
.combo { width: 100px; height: 21px; box-sizing: border-box; background: #fff; border: 1px solid #bbb; display: flex; align-items: center; justify-content: space-between; padding: 0 5px 0 3px; }

/* main */
.main { height: 842px; flex: none; display: flex; background: #f2f2f2; }
.side { width: 170px; flex: none; box-sizing: border-box; border-left: 1px solid #bdbdbd; border-right: 2px solid #c4c4c4; border-bottom: 2px solid #c4c4c4; background: #fff; display: flex; flex-direction: column; }
.side-top { height: 28px; flex: none; box-sizing: border-box; background: #f0f0f0; border-bottom: 1px solid #c4c4c4; display: flex; align-items: center; padding-left: 6px; gap: 4px; }
.side-top .plus { margin-right: 87px; width: 14px; height: 14px; }
.sbtn { width: 24px; height: 24px; box-sizing: border-box; border: 1px solid #7db8f0; border-radius: 3px; background: #eef6fd; display: flex; align-items: center; justify-content: center; }
.side-body { flex: 1; display: flex; }
.tree { list-style: none; margin: 0; padding: 3px 0 0; width: 155px; }
.node { height: 24px; display: flex; align-items: center; padding-left: 5px; gap: 4px; }
.node.sub { margin-left: 20px; width: 131px; padding-left: 4px; gap: 6px; box-sizing: border-box; }
.node.on { height: 21px; margin-top: 1.5px; margin-bottom: 1.5px; background: #c6d7ef; }
.scroll { width: 8px; height: 762px; margin-top: 38px; background: #c8c8c8; border-radius: 4px; }

.panels { width: 298px; margin-left: 4px; flex: none; display: flex; flex-direction: column; gap: 5px; }
.panel { background: #fff; box-sizing: border-box; border: 1px solid #bdbfc2; border-top: 0; display: flex; flex-direction: column; }
.p1 { height: 330px; }
.p2 { flex: 1; border-bottom-width: 2px; }
.phead { height: 11px; flex: none; background: #d3d5d8; text-align: right; padding-right: 3px; line-height: 10px; color: #777; font-size: 13px; font-weight: 700; }
.p2 .phead { height: 12px; }
.ptabs { height: 22px; flex: none; display: flex; background: #efefef; border-bottom: 1px solid #c4c4c4; box-sizing: border-box; }
.ptabs span { width: 64px; text-align: center; line-height: 21px; background: #dcdcdc; color: #8a8a8a; margin-left: 1px; }
.ptabs .on { background: #efefef; color: #333; font-weight: 700; margin-left: 0; }
.ptools { height: 30px; flex: none; display: flex; align-items: center; background: #f0f0f0; padding-left: 4px; box-sizing: border-box; border-bottom: 1px solid #c4c4c4; }
.pt { display: flex; align-items: center; gap: 3px; }
.pt .caret { margin-left: 7px; }
.pt.off { color: #bbb; }
.w1 { width: 68px; }
.w2 { width: 59px; }
.w3 { width: 57px; }
.pmore { margin-left: auto; margin-right: 2px; font-size: 9px; color: #444; letter-spacing: -2px; }
.psearch { height: 19px; flex: none; box-sizing: border-box; border-bottom: 1px solid #c4c4c4; display: flex; align-items: center; justify-content: space-between; padding: 0 6px 0 3px; color: #999; }
.psearch svg { width: 11px; height: 11px; }
.plist { flex: 1; padding-left: 20px; }
.plist span { display: inline-block; padding: 0 4px; height: 21px; line-height: 21px; background: #c6d7ef; }

.table { flex: 1; display: flex; flex-direction: column; }
.thead { height: 19px; display: flex; background: #efefef; }
.thead .c0 { background: #fff; }
.thead span, .trow span { box-sizing: border-box; text-align: center; line-height: 19px; border-bottom: 1px solid #c8c8c8; }
.c0 { width: 22px; flex: none; }
.c1 { width: 100px; border-right: 1px solid #c8c8c8; }
.c2 { width: 139px; border-right: 1px solid #c8c8c8; }
.trow { height: 21px; display: flex; }
.trow span { line-height: 20px; }
.trow .c0 { background: #efefef; }
.trow .c2 { background: #e8e8e8; }
.tfill { flex: 1; display: flex; }
.tfill .c0 { background: #efefef; }

.split { width: 4px; flex: none; background: #fff; position: relative; }
.split i { position: absolute; left: 0; right: 0; top: 372px; height: 100px; background: #5d6166; }

.canvas { flex: 1; background: #000; position: relative; overflow: hidden; }
.cad { width: 1444px; height: 842px; }
.cadtext { font-family: Roboto, "Liberation Sans", sans-serif; font-weight: 100; stroke-width: .35px; }
.cadtext.cjk { font-family: "Noto Sans CJK SC", sans-serif; font-weight: 400; }
.bub { font: 700 15px "Liberation Sans", sans-serif; fill: #fff; }
.axis { font: 400 13px "Liberation Sans", sans-serif; }
.t3d { font: 400 8px "Liberation Sans", sans-serif; fill: #aaa; }
.ball { font: 700 13px "Liberation Sans", sans-serif; fill: #fff; }

.popup { position: absolute; left: 150px; top: 399px; width: 191px; height: 72px; box-sizing: border-box; padding-top: 7px; background: #ebeded; border-radius: 3px; color: #444; }
.pop-row { height: 29px; display: flex; align-items: center; padding-left: 42px; position: relative; }
.pop-row svg { position: absolute; left: 15px; top: 9px; width: 16px; height: 10px; }
.latin { word-spacing: 2px; letter-spacing: .3px; }

/* status + taskbar */
.status { height: 29px; flex: none; display: flex; align-items: center; background: #dddee0; color: #444; padding-left: 2px; }
.status > span { flex: none; }
.s-xy { width: 207px; font-size: 13px; letter-spacing: .15px; }
.s-h { width: 79px; }
.s-e { width: 133px; }
.s-z { width: 103px; }
.s-v { width: 80px; }
.sb { height: 24px; box-sizing: border-box; flex: none; border: 1px solid #9b9b9b; background: #d3d4d6; display: flex; align-items: center; justify-content: center; gap: 3px; margin-right: 4px; }
.sb svg { width: 16px; height: 16px; }
.b1 { width: 25px; margin-right: 3px; }
.b2 { width: 35px; background: #fff; border-color: #3a9bf0; }
.b3 { width: 25px; }
.b4 { width: 35px; }
.bt1 { width: 72px; }
.bt2 { width: 60px; }
.s-tip { color: #333; }
.s-fps { margin-left: auto; margin-right: 12px; font-size: 12px; }

.taskbar { height: 9px; flex: none; box-sizing: border-box; border-top: 1px solid #f4f4f4; position: relative; overflow: hidden; background: linear-gradient(90deg, #2f7a9c, #1e5c90 40%, #1f5b8f); }
.orb { position: absolute; left: 12px; top: 1px; width: 29px; height: 29px; border-radius: 50%; background: #9cc4da; border: 1px solid #dde; box-sizing: border-box; }
.dot { position: absolute; top: 2px; width: 10px; height: 10px; border-radius: 50%; }
.d1 { left: 72px; background: #d8e23a; }
.d2 { left: 85px; background: #7fd0e8; }
.d3 { left: 136px; background: #2f9ce8; width: 16px; height: 16px; }
.d4 { left: 154px; background: #f0a81c; }
.task { position: absolute; top: 0; height: 8px; box-sizing: border-box; border: 1px solid #1b2b3a; border-bottom: 0; background: linear-gradient(#d8e7ee, #a9c6d4); }
.task b { position: absolute; top: 1px; height: 10px; width: 30px; border-radius: 3px; }
.t-a { left: 180px; width: 159px; }
.t-a b { left: 10px; background: #2d6fc4; }
.t-b { left: 342px; width: 158px; }
.t-b b { left: 10px; background: #7fb4ef; }
.t-c { left: 503px; width: 158px; }
.t-c b { left: 18px; background: #59d3d8; border-radius: 50%; width: 24px; height: 24px; }
.clock { position: absolute; left: 1834px; top: 2px; color: #fff; font-size: 11px; line-height: 14px; }
.show { position: absolute; right: 0; top: 0; width: 14px; height: 8px; background: #3c6f9c; border-left: 1px solid #8fb0c8; }
</style>

<style>
html, body { margin: 0; overflow: hidden; }
</style>
